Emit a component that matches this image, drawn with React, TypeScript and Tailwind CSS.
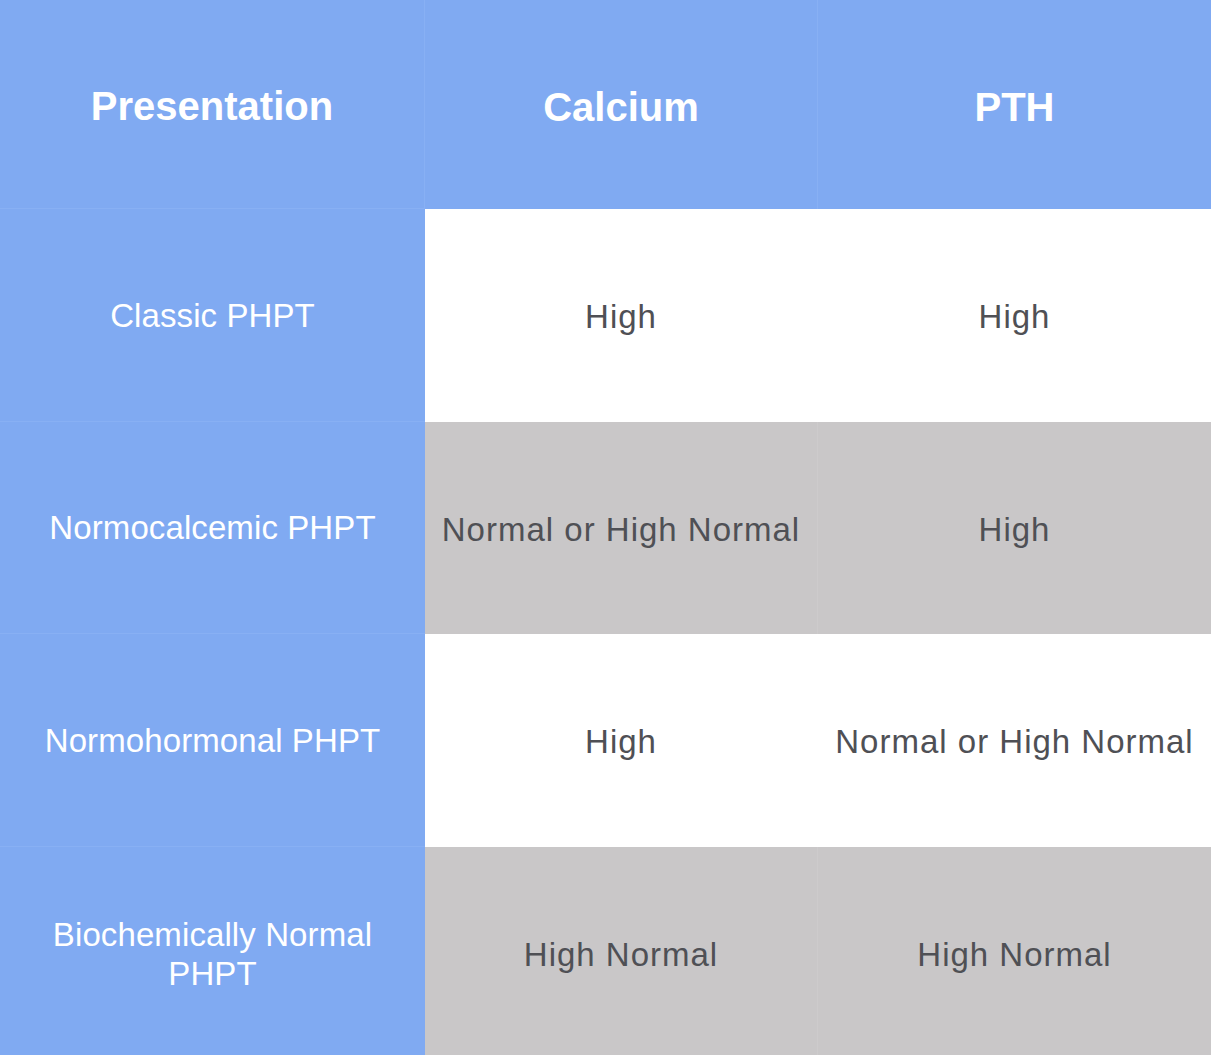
import React from "react";

const rows = [
  { p: ["Classic PHPT"], c: "High", t: "High", bg: "bg-white" },
  { p: ["Normocalcemic PHPT"], c: "Normal or High Normal", t: "High", bg: "bg-[#c9c7c8]" },
  { p: ["Normohormonal PHPT"], c: "High", t: "Normal or High Normal", bg: "bg-white" },
  { p: ["Biochemically Normal", "PHPT"], c: "High Normal", t: "High Normal", bg: "bg-[#c9c7c8]" },
];

export default function App() {
  return (
    <div className="w-[1211px] h-[1055px] overflow-hidden">
      <div
        className="w-[1211px] grid grid-cols-[425px_393px_393px] grid-rows-[209px_213px_212px_213px_213px]"
        style={{ fontFamily: '"Liberation Sans", Arial, sans-serif' }}
      >
        <div className="bg-[#80aaf2] flex items-center justify-center text-white font-bold text-[40px] border-r border-b border-[#88b0f4] pt-[4px]">
          Presentation
        </div>
        <div className="bg-[#80aaf2] flex items-center justify-center text-white font-bold text-[40px] border-r border-[#88b0f4] pt-[4px]">
          Calcium
        </div>
        <div className="bg-[#80aaf2] flex items-center justify-center text-white font-bold text-[40px] pt-[4px]">
          PTH
        </div>
        {rows.map((r, i) => (
          <React.Fragment key={i}>
            <div
              className={`bg-[#80aaf2] flex flex-col items-center justify-center text-white text-[33px] leading-[39px] tracking-[0.1px] ${
                i < rows.length - 1 ? "border-b border-[#88b0f4]" : ""
              }`}
            >
              {r.p.map((l, j) => (
                <span key={j}>{l}</span>
              ))}
            </div>
            <div
              className={`${r.bg} flex items-center justify-center text-[#4f5055] text-[33px] tracking-[1px] pt-[3px] border-r ${
                i % 2 === 1 ? "border-[#cdcbcc]" : "border-white"
              }`}
            >
              {r.c}
            </div>
            <div className={`${r.bg} flex items-center justify-center text-[#4f5055] text-[33px] tracking-[1px] pt-[3px]`}>
              {r.t}
            </div>
          </React.Fragment>
        ))}
      </div>
    </div>
  );
}
